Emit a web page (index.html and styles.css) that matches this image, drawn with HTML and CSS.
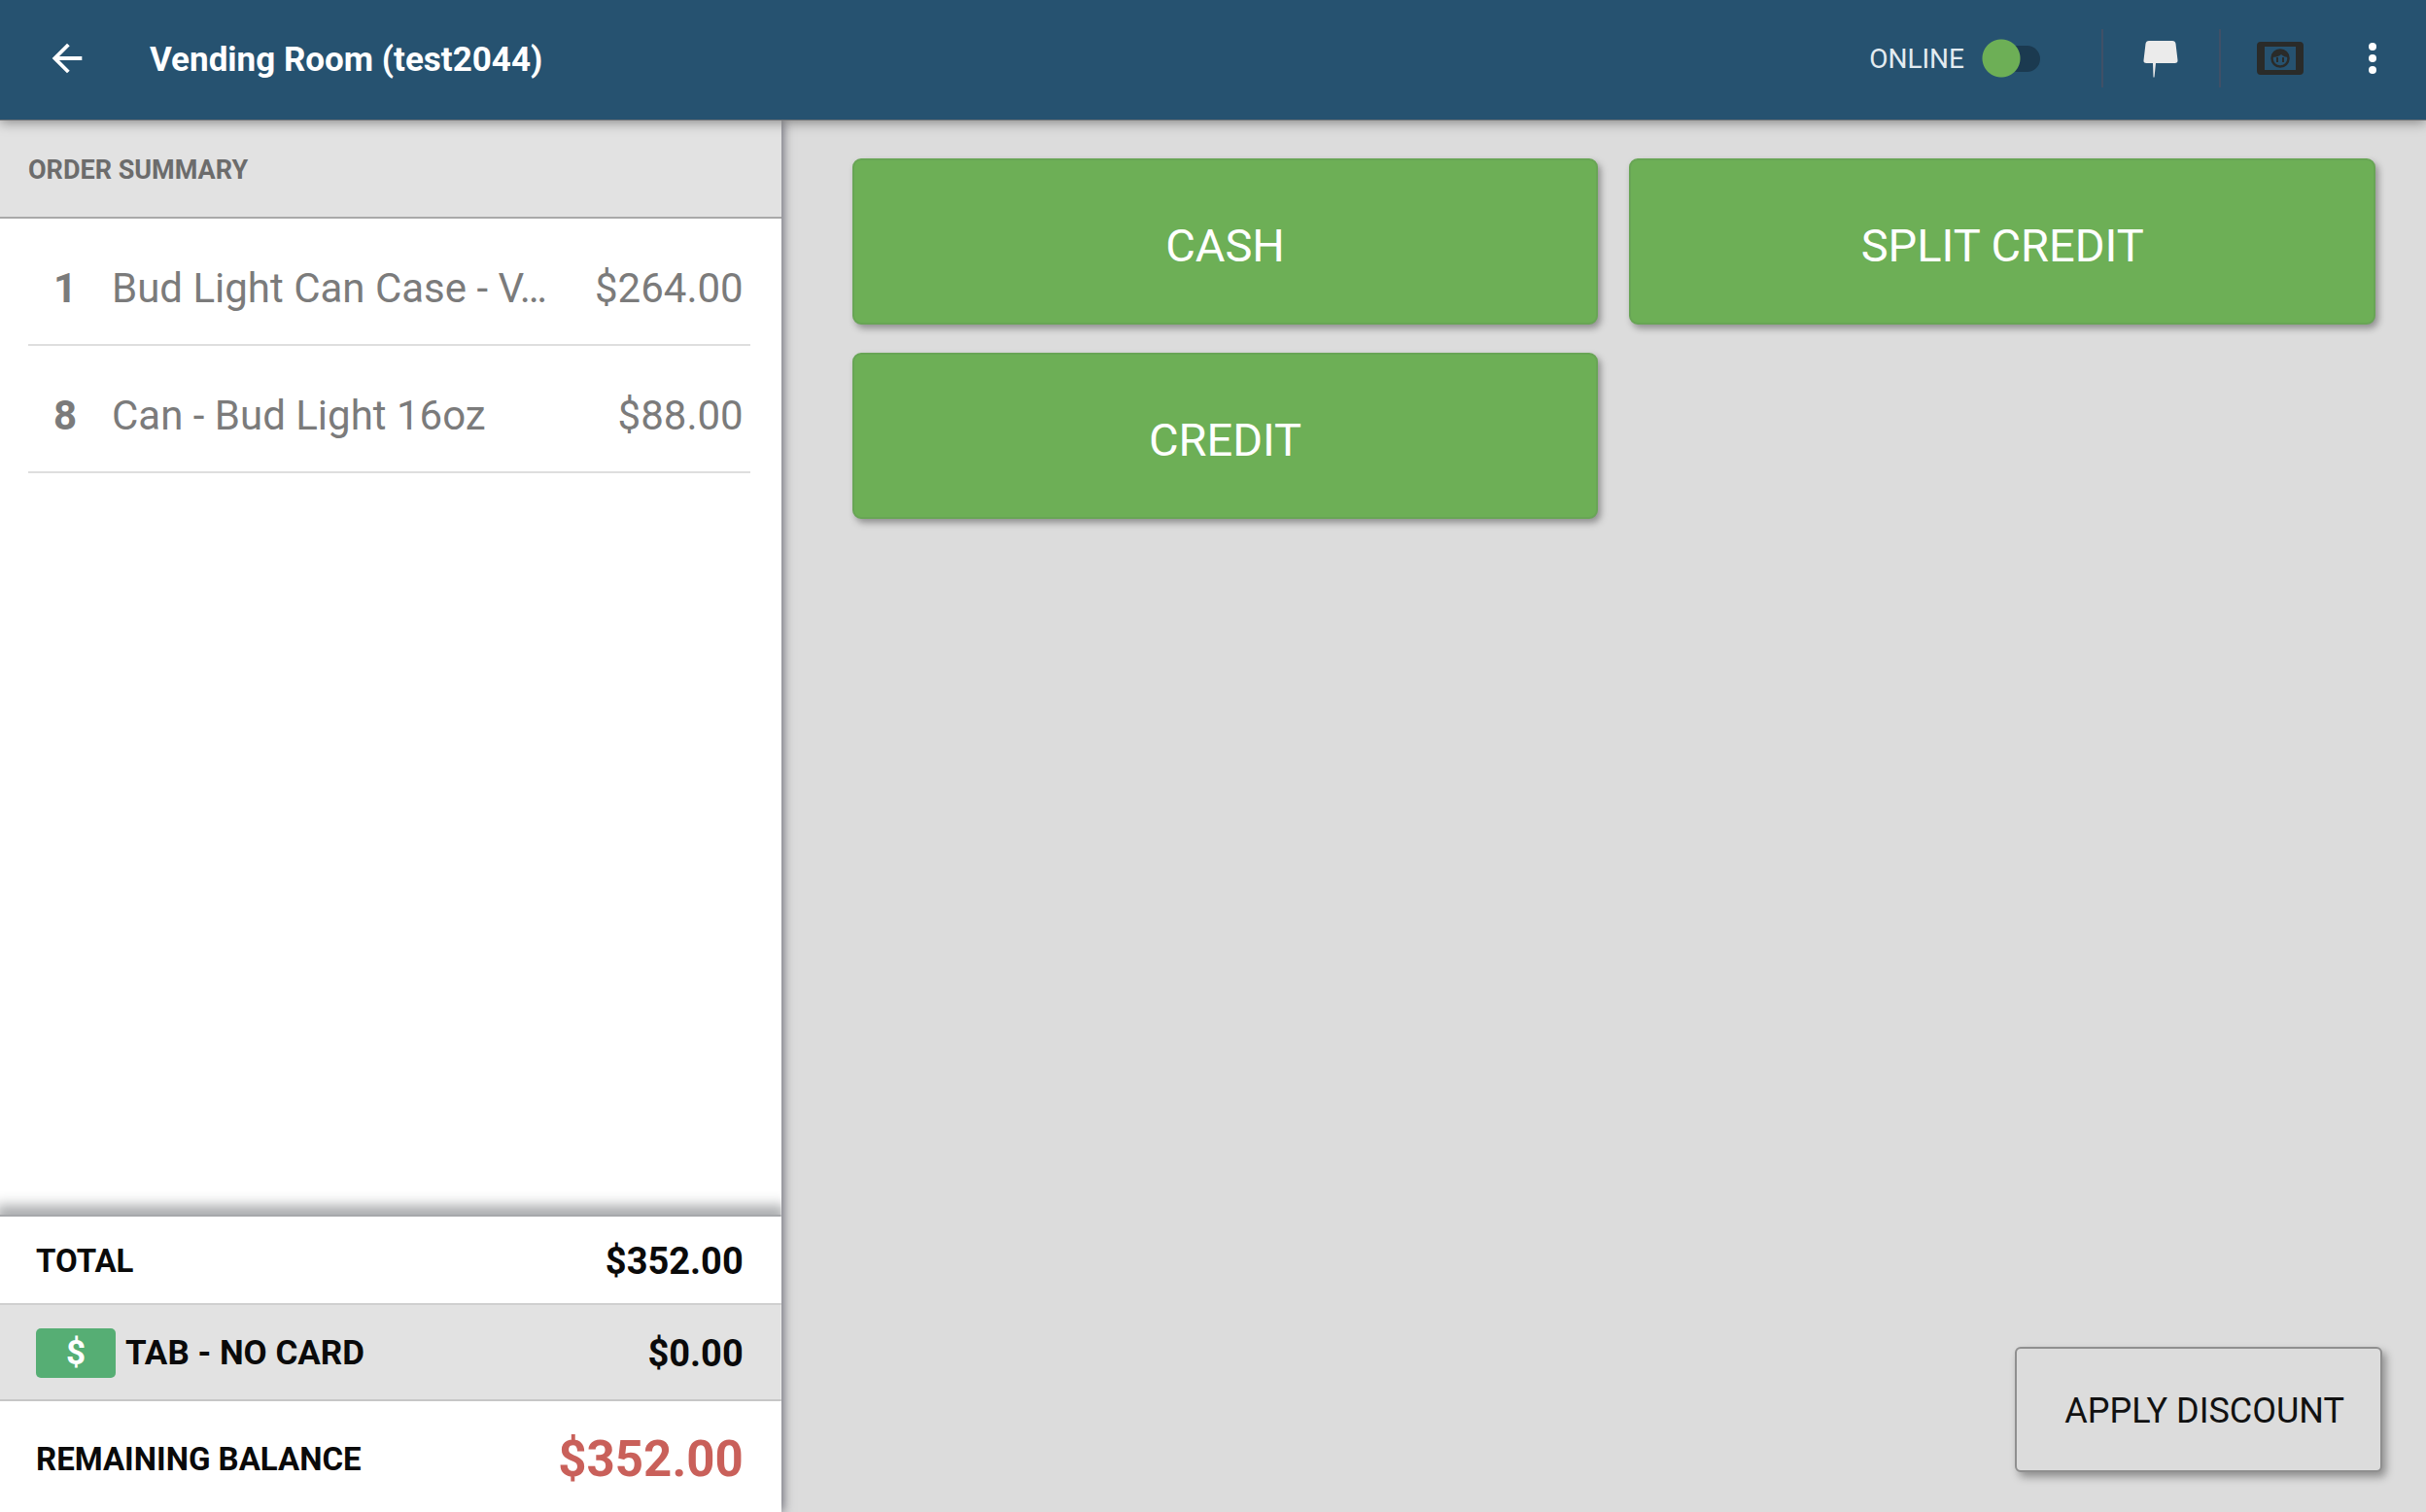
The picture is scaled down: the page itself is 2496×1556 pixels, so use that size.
FILE: index.html
```html
<!DOCTYPE html>
<html lang="en">
<head>
    <meta charset="UTF-8">
    <meta name="viewport" content="width=device-width, initial-scale=1.0">
    <title>Vending Room</title>
    <link rel="stylesheet" href="styles.css">
</head>
<body>
    <header class="topbar">
        <button class="icon-btn back-btn" aria-label="Back">
            <svg width="46" height="46" viewBox="0 0 24 24" fill="#fff"><path d="M20 11H7.83l5.59-5.59L12 4l-8 8 8 8 1.41-1.41L7.83 13H20v-2z"/></svg>
        </button>
        <h1>Vending Room (test2044)</h1>

        <label class="online" for="online">ONLINE</label>
        <input type="checkbox" role="switch" id="online" class="switch">

        <button class="icon-btn chat-btn" aria-label="Messages">
            <svg width="36" height="38" viewBox="0 0 36 38" fill="#ebebeb"><path d="M6 0h24q3 0 3.500 3l2 17q.3 3-3 3H13l-1.500 14.500h-1L10 23H3.500q-3.500 0-3-3l2-17q.5-3 3.500-3z"/></svg>
        </button>
        <button class="icon-btn cash-btn" aria-label="Cash drawer">
            <svg width="48" height="34" viewBox="0 0 48 34">
                <path fill="#2a2b29" fill-rule="evenodd" d="M4 0h40q4 0 4 4v26q0 4-4 4H4q-4 0-4-4V4q0-4 4-4zM8 5v24h32V5z"/>
                <circle cx="24" cy="17" r="8.500" fill="none" stroke="#2a2b29" stroke-width="2.500"/>
                <path fill="#2a2b29" d="M15 16q1-8 9-8t9 8q-5 0-8-3-3 3-10 3z"/>
                <path stroke="#2a2b29" stroke-width="2" d="M21 16v5M27 16v5"/>
            </svg>
        </button>
        <button class="icon-btn menu-btn" aria-label="More options">
            <svg width="10" height="34" viewBox="0 0 10 34" fill="#fff"><circle cx="5" cy="5" r="4"/><circle cx="5" cy="17" r="4"/><circle cx="5" cy="29" r="4"/></svg>
        </button>
    </header>

    <div class="content">
        <section class="order">
            <h2>ORDER SUMMARY</h2>

            <div class="items">
                <table>
                    <tr>
                        <td class="qty">1</td>
                        <td class="name">Bud Light Can Case - V…</td>
                        <td class="price">$264.00</td>
                    </tr>
                    <tr>
                        <td class="qty">8</td>
                        <td class="name">Can - Bud Light 16oz</td>
                        <td class="price">$88.00</td>
                    </tr>
                </table>
            </div>

            <div class="totals">
                <div class="total-row">
                    <span>TOTAL</span>
                    <span class="amount">$352.00</span>
                </div>
                <div class="total-row tab-row">
                    <span class="tab-badge">$</span>
                    <span>TAB - NO CARD</span>
                    <span class="amount">$0.00</span>
                </div>
                <div class="total-row balance-row">
                    <span>REMAINING BALANCE</span>
                    <span class="amount">$352.00</span>
                </div>
            </div>
        </section>

        <main class="payment">
            <div class="pay-grid">
                <button class="pay-btn">CASH</button>
                <button class="pay-btn">SPLIT CREDIT</button>
                <button class="pay-btn">CREDIT</button>
            </div>
            <button class="discount-btn">APPLY DISCOUNT</button>
        </main>
    </div>
</body>
</html>
```

FILE: styles.css
```css
:root {
    --bar-color: #265270;
    --green: #6daf56;
    --panel-gray: #e2e2e2;
    --page-gray: #dcdcdc;
    --item-color: #7b7b7b;
    --red: #c9605a;
}

* {
    box-sizing: border-box;
}

body {
    margin: 0;
    min-height: 100vh;
    display: flex;
    flex-direction: column;
    font-family: Roboto, "Liberation Sans", sans-serif;
    background-color: var(--page-gray);
}

button {
    font-family: inherit;
    cursor: pointer;
}

/* Top bar */
.topbar {
    display: flex;
    align-items: center;
    height: 124px;
    padding: 0 50px 3px 46px;
    background-color: var(--bar-color);
    border-bottom: 1px solid #6f7377;
    box-shadow: 0 2px 12px rgba(0, 0, 0, 0.4);
    position: relative;
    z-index: 2;
}

.topbar h1 {
    margin: 0 auto 0 62px;
    padding-top: 3px;
    font-size: 35px;
    font-weight: 700;
    color: #fff;
}

.icon-btn {
    display: flex;
    align-items: center;
    justify-content: center;
    padding: 0;
    border: none;
    background: none;
}

.online {
    font-size: 28px;
    color: #e3ebf0;
    margin-right: 18px;
}

.switch {
    appearance: none;
    width: 60px;
    height: 40px;
    margin: 0 63px 0 0;
    background: radial-gradient(circle at 20px 20px, var(--green) 19px, transparent 20px);
    position: relative;
    cursor: pointer;
}

.switch::before {
    content: "";
    position: absolute;
    z-index: -1;
    top: 7px;
    left: 10px;
    right: 0;
    height: 27px;
    border-radius: 14px;
    background-color: #1b3a50;
}

.chat-btn,
.cash-btn {
    height: 60px;
    border-left: 2px solid #3f5067;
}

.chat-btn {
    padding: 2px 42px 0 41px;
}

.cash-btn {
    padding-left: 37px;
    margin-right: 66px;
}

/* Order panel */
.content {
    flex: 1;
    display: grid;
    grid-template-columns: 32.2% 1fr;
}

.order {
    display: flex;
    flex-direction: column;
    background-color: #fff;
    box-shadow: 2px 0 10px rgba(60, 60, 75, 0.7);
    z-index: 1;
}

.order h2 {
    margin: 0;
    padding: 0 29px;
    height: 101px;
    line-height: 102px;
    font-size: 27px;
    font-weight: 700;
    color: #6c6c6c;
    background-color: var(--panel-gray);
    border-bottom: 2px solid #a9a9a9;
}

.items {
    flex: 1;
    padding: 0 32px 0 29px;
}

.items table {
    width: 100%;
    border-collapse: separate;
    border-spacing: 0;
    font-size: 42px;
    color: var(--item-color);
}

.items td {
    height: 131px;
    padding: 13px 0 0;
    border-bottom: 2px solid #dedede;
    white-space: nowrap;
}

.items .qty {
    width: 86px;
    padding-left: 26px;
    font-weight: 700;
}

.items .price {
    padding-right: 7px;
    text-align: right;
}

.totals {
    border-top: 2px solid #a6a8ab;
    box-shadow: 0 -6px 12px 4px rgba(50, 55, 60, 0.4);
    clip-path: inset(-24px 0 0 0);
}

.total-row {
    display: flex;
    align-items: center;
    height: 89px;
    padding: 2px 39px 0 37px;
    font-size: 33px;
    font-weight: 700;
    color: #0a0a0a;
    background-color: #fff;
}

.total-row .amount {
    margin-left: auto;
    font-size: 38px;
}

.tab-row {
    height: 101px;
    font-size: 35px;
    background-color: var(--panel-gray);
    border-top: 2px solid #cfcfcf;
    border-bottom: 2px solid #c6c6c6;
}

.tab-badge {
    width: 82px;
    height: 51px;
    margin-right: 10px;
    border-radius: 5px;
    line-height: 51px;
    text-align: center;
    color: #fff;
    background-color: #56ae74;
}

.balance-row {
    height: 114px;
    padding-top: 5px;
}

.total-row.balance-row .amount {
    font-size: 51px;
    color: var(--red);
}

/* Payment options */
.payment {
    display: flex;
    flex-direction: column;
    justify-content: space-between;
    padding: 39px 45px 41px 73px;
}

.pay-grid {
    display: grid;
    grid-template-columns: 1fr 1fr;
    gap: 29px 32px;
    padding-right: 7px;
}

.pay-btn {
    height: 171px;
    padding: 8px 0 0;
    border: 2px solid #68a555;
    border-radius: 9px;
    font-size: 47px;
    color: #fff;
    background-color: var(--green);
    box-shadow: 3px 4px 7px rgba(0, 0, 0, 0.35);
}

.discount-btn {
    align-self: flex-end;
    height: 129px;
    padding: 2px 37px 0 49px;
    border: 2px solid #8f8f8f;
    border-radius: 6px;
    font-size: 36px;
    color: #111;
    background-color: var(--page-gray);
    box-shadow: 4px 5px 9px rgba(0, 0, 0, 0.35);
}
```
